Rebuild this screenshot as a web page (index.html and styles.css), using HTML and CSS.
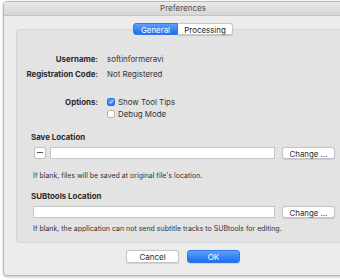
FILE: index.html
```html
<!DOCTYPE html>
<html>
<head>
<meta charset="utf-8">
<link rel="stylesheet" href="styles.css">
</head>
<body>
<div class="window">
  <div class="titlebar">Preferences</div>
  <div class="content">
    <div class="tabs">
      <div class="tab active">General</div>
      <div class="tab">Processing</div>
    </div>
    <div class="panel">
      <div class="form">
        <div class="label">Username:</div>
        <div class="value">softinformeravi</div>
        <div class="label">Registration Code:</div>
        <div class="value">Not Registered</div>
        <div class="label options-label">Options:</div>
        <div class="checks">
          <label class="check"><span class="box checked"><svg viewBox="0 0 10 10" width="8" height="8"><path d="M2.2 5.2 L4.2 7.2 L7.8 2.6" fill="none" stroke="#fff" stroke-width="1.5" stroke-linecap="round" stroke-linejoin="round"/></svg></span>Show Tool Tips</label>
          <label class="check"><span class="box"></span>Debug Mode</label>
        </div>
      </div>

      <div class="section">
        <div class="heading">Save Location</div>
        <div class="row">
          <div class="mini-btn"><span class="dash"></span></div>
          <div class="field"></div>
          <div class="btn change">Change ...</div>
        </div>
        <div class="hint">If blank, files will be saved at original file's location.</div>
      </div>

      <div class="section second">
        <div class="heading">SUBtools Location</div>
        <div class="row">
          <div class="field"></div>
          <div class="btn change">Change ...</div>
        </div>
        <div class="hint hint2">If blank, the application can not send subtitle tracks to SUBtools for editing.</div>
      </div>
    </div>
    <div class="footer">
      <div class="btn cancel">Cancel</div>
      <div class="btn ok">OK</div>
    </div>
  </div>
</div>
</body>
</html>
```
FILE: styles.css
```css
html, body {
  margin: 0;
  padding: 0;
  background: #ffffff;
  overflow: hidden;
}
body {
  width: 340px;
  height: 280px;
  font-family: "Inter", "Roboto", "Liberation Sans", sans-serif;
  font-size: 7.9px;
  color: #262626;
}
.window {
  margin: 1px 0 0 3px;
  width: 360px;
  height: 275px;
  border: 1px solid #b9b9b9;
  border-radius: 4px;
  background: #ececec;
  box-shadow: 0 1px 3px rgba(0,0,0,0.25);
  overflow: hidden;
  box-sizing: border-box;
}
.titlebar {
  height: 14px;
  line-height: 13px;
  text-align: center;
  font-size: 8px;
  color: #4d4d4d;
  background: linear-gradient(#e9e9e9, #d6d6d6);
  border-bottom: 1px solid #c4c4c4;
  box-sizing: border-box;
}
.content {
  padding: 7px 12px 0 12px;
}
.tabs {
  position: relative;
  z-index: 2;
  display: flex;
  justify-content: center;
  height: 12px;
}
.tab {
  height: 12px;
  line-height: 12px;
  font-size: 7.9px;
  background: #ffffff;
  border: 1px solid #c9c9c9;
  box-sizing: border-box;
  color: #222;
  text-align: center;
}
.tab.active {
  color: #fff;
  background: linear-gradient(#5aa0fa, #1f6ff0);
  border-color: #2f78ee;
  border-radius: 3px 0 0 3px;
  width: 45px;
}
.tab:last-child {
  border-left: none;
  border-radius: 0 3px 3px 0;
  width: 55px;
  box-shadow: 0 0.5px 1px rgba(0,0,0,0.15);
}
.panel {
  margin-top: -6px;
  height: 214px;
  background: #e3e3e3;
  border: 1px solid #d6d6d6;
  border-radius: 3px;
  box-sizing: border-box;
  padding: 23px 0 0 0;
}
.form {
  display: grid;
  grid-template-columns: 81px 1fr;
  column-gap: 9px;
  row-gap: 3px;
  line-height: 12px;
}
.label {
  text-align: right;
  font-weight: 700;
  color: #2a2a2a;
}
.value {
  color: #333;
}
.options-label {
  margin-top: 13px;
}
.checks {
  margin-top: 13px;
  display: flex;
  flex-direction: column;
}
.check {
  display: flex;
  align-items: center;
  height: 12px;
  gap: 3px;
  color: #333;
}
.box {
  width: 8px;
  height: 8px;
  border-radius: 2px;
  background: #fff;
  border: 0.5px solid #b5b5b5;
  box-sizing: border-box;
  display: flex;
  align-items: center;
  justify-content: center;
}
.box.checked {
  background: linear-gradient(#5aa0fa, #2a76f2);
  border-color: #2a6fe0;
}
.section {
  padding: 0 14px 0 16px;
  margin-top: 11px;
}
.section.second {
  margin-top: 10px;
}
.heading {
  font-weight: 700;
  line-height: 12px;
  color: #2a2a2a;
  margin-left: -2px;
}
.row {
  display: flex;
  align-items: center;
  margin-top: 3px;
  height: 13px;
}
.mini-btn {
  width: 12px;
  height: 12px;
  background: #fff;
  border: 0.5px solid #bdbdbd;
  border-radius: 2px;
  box-sizing: border-box;
  display: flex;
  align-items: center;
  justify-content: center;
  margin-left: 1px;
  margin-right: 4px;
}
.dash {
  width: 6px;
  height: 1px;
  background: #555;
}
.field {
  flex: 1;
  height: 12px;
  background: #fff;
  border: 0.5px solid #c6c6c6;
  box-sizing: border-box;
}
.btn {
  height: 12px;
  line-height: 12px;
  background: #fff;
  border: 0.5px solid #c4c4c4;
  border-radius: 3px;
  text-align: center;
  box-sizing: border-box;
  box-shadow: 0 0.5px 1px rgba(0,0,0,0.12);
  color: #2a2a2a;
}
.change {
  width: 53px;
  margin-left: 7px;
}
.hint {
  margin-top: 12px;
  line-height: 9px;
  font-size: 7px;
  color: #333;
}
.hint.hint2 {
  margin-top: 6px;
}
.footer {
  display: flex;
  justify-content: center;
  gap: 8px;
  margin-top: 7px;
}
.cancel, .ok {
  width: 53px;
  height: 13px;
  line-height: 13px;
  font-size: 8px;
}
.ok {
  background: linear-gradient(#5aa0fa, #1f6ff0);
  border-color: #2f78ee;
  color: #fff;
}
```
